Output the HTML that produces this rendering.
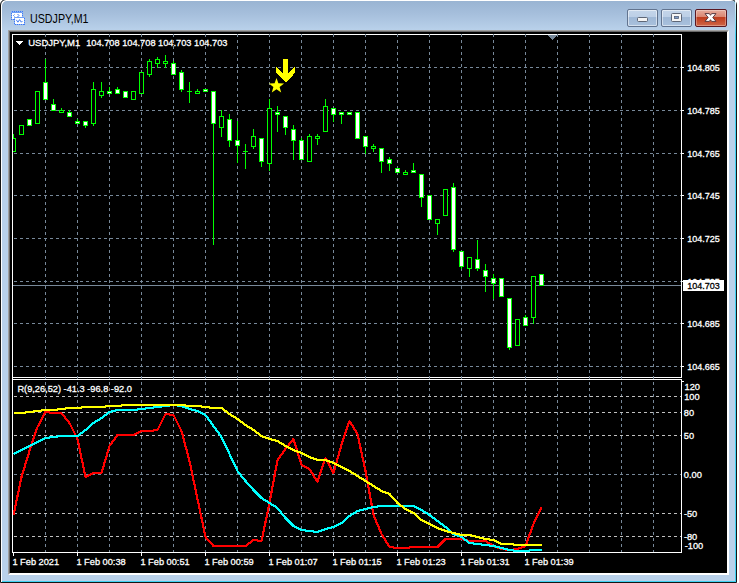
<!DOCTYPE html>
<html><head><meta charset="utf-8"><title>USDJPY,M1</title>
<style>
html,body{margin:0;padding:0;background:#fff;overflow:hidden}
body{width:739px;height:583px;position:relative;font-family:"Liberation Sans",sans-serif}
#win{position:absolute;left:0;top:-1px;width:735px;height:582px;border:1px solid #151515;border-radius:6px 6px 0 0;
 background:linear-gradient(#98b3d2 0px,#a6bfdc 14px,#b9d1ea 30px,#b9d1ea 100%);
 box-shadow:inset 1px 1px 0 #fff, inset -1px -1px 0 #3fd2f2;}
#title{position:absolute;left:30px;top:12px;font-size:12px;line-height:14px;color:#000;white-space:nowrap;transform-origin:0 0;transform:scaleX(0.89)}
#client{position:absolute;left:8px;top:30px;width:721px;height:545px;background:#000;box-sizing:border-box;
 border-top:1px solid #a0a0a0;border-left:1px solid #a0a0a0;border-right:1px solid #fff;border-bottom:1px solid #fff}
#client:before{content:"";position:absolute;left:0;top:0;right:0;bottom:0;border-top:1px solid #696969;border-left:1px solid #696969;border-right:1px solid #fff;border-bottom:1px solid #fff}
svg{position:absolute;left:0;top:0}
.btn{position:absolute;top:9px;width:31px;height:18px;box-sizing:border-box;border:1px solid #62748f;border-radius:2px;
 background:linear-gradient(#c4d5ea 0%,#bccfe6 44%,#9fb8d6 47%,#a9c1dd 100%);box-shadow:inset 0 0 0 1px rgba(255,255,255,.5);}
.btn.close{border-color:#5a1822;background:linear-gradient(#e6ab9c 0%,#d98570 44%,#bf3b1c 47%,#cf6648 100%);box-shadow:inset 0 0 0 1px rgba(255,255,255,.3);}
</style></head>
<body>
<div id="win"></div>
<div style="position:absolute;left:735px;top:1px;width:1px;height:34px;background:linear-gradient(#eaf6fb 0,#c8ecf8 8px,#7fdff6 22px,#3fd2f2 34px)"></div>
<div id="title">USDJPY,M1</div>
<div class="btn" style="left:627px"></div>
<div class="btn" style="left:661px"></div>
<div class="btn close" style="left:695px;width:32px"></div>
<div id="client"></div>
<svg width="739" height="583" viewBox="0 0 739 583" shape-rendering="crispEdges">
<defs><clipPath id="cm"><rect x="13" y="35" width="668" height="342"/></clipPath>
<clipPath id="cs"><rect x="13" y="380" width="668" height="172"/></clipPath></defs>
<!-- title icon -->
<g>
<rect x="11.5" y="11.5" width="11" height="8" fill="#fff" stroke="#8db3f7"/>
<rect x="11.5" y="11.5" width="11" height="8" fill="none" stroke="#3f7bf2" stroke-dasharray="1 1"/>
<rect x="12" y="12" width="10" height="1" fill="#6f9ff5"/>
<path d="M14.5 14.5l-1 1 1 1M17.5 14l1.5 1.5-1.5 1.5" fill="none" stroke="#3f7bf2" shape-rendering="auto"/>
<rect x="14.5" y="17.5" width="10" height="7" fill="#fff" stroke="#8db3f7"/>
<rect x="14.5" y="17.5" width="10" height="7" fill="none" stroke="#3f7bf2" stroke-dasharray="1 1"/>
<rect x="15" y="17" width="9" height="1" fill="#6f9ff5"/>
<path d="M16.3 19.8l1.6 2.4 1.7-2.6 1.7 2.6 1.2-1.2" fill="none" stroke="#3f7bf2" stroke-width="1" shape-rendering="auto"/>
</g>
<!-- caption glyphs -->
<g shape-rendering="auto">
<rect x="637.5" y="17.5" width="10" height="4" rx="1" fill="#f4f4f4" stroke="#5e6676"/>
<rect x="671.5" y="13.5" width="10" height="8" rx="1" fill="#f6f6f6" stroke="#5e6676"/>
<rect x="674.5" y="16.5" width="4" height="2" fill="#7d9cc6" stroke="#55607a" stroke-width="0.8"/>
<path d="M705 13.6H709.4L710.5 15.3L711.6 13.6H716L712.8 17.5L716 21.4H711.6L710.5 19.7L709.4 21.4H705L708.2 17.5Z" fill="#fff" stroke="#5b3a40" stroke-width="1" stroke-linejoin="round"/>
</g>
<g fill="#fff">
<rect x="12" y="34" width="670" height="1"/>
<rect x="12" y="34" width="1" height="519"/>
<rect x="681" y="34" width="1" height="344"/>
<rect x="681" y="379" width="1" height="174"/>
<rect x="682" y="381" width="2" height="1"/>
<rect x="12" y="377" width="670" height="1"/>
<rect x="12" y="379" width="670" height="1"/>
<rect x="12" y="552" width="670" height="1"/>
<rect x="682" y="67" width="2" height="1"/>
<rect x="682" y="110" width="2" height="1"/>
<rect x="682" y="153" width="2" height="1"/>
<rect x="682" y="195" width="2" height="1"/>
<rect x="682" y="238" width="2" height="1"/>
<rect x="682" y="281" width="2" height="1"/>
<rect x="682" y="323" width="2" height="1"/>
<rect x="682" y="366" width="2" height="1"/>
<rect x="13" y="553" width="1" height="3"/>
<rect x="77" y="553" width="1" height="3"/>
<rect x="141" y="553" width="1" height="3"/>
<rect x="205" y="553" width="1" height="3"/>
<rect x="269" y="553" width="1" height="3"/>
<rect x="333" y="553" width="1" height="3"/>
<rect x="397" y="553" width="1" height="3"/>
<rect x="461" y="553" width="1" height="3"/>
<rect x="525" y="553" width="1" height="3"/>
</g>
<path d="M45.5 34V552" stroke="#778899" stroke-dasharray="3 3"/>
<path d="M77.5 34V552" stroke="#778899" stroke-dasharray="3 3"/>
<path d="M109.5 34V552" stroke="#778899" stroke-dasharray="3 3"/>
<path d="M141.5 34V552" stroke="#778899" stroke-dasharray="3 3"/>
<path d="M173.5 34V552" stroke="#778899" stroke-dasharray="3 3"/>
<path d="M205.5 34V552" stroke="#778899" stroke-dasharray="3 3"/>
<path d="M237.5 34V552" stroke="#778899" stroke-dasharray="3 3"/>
<path d="M269.5 34V552" stroke="#778899" stroke-dasharray="3 3"/>
<path d="M301.5 34V552" stroke="#778899" stroke-dasharray="3 3"/>
<path d="M333.5 34V552" stroke="#778899" stroke-dasharray="3 3"/>
<path d="M365.5 34V552" stroke="#778899" stroke-dasharray="3 3"/>
<path d="M397.5 34V552" stroke="#778899" stroke-dasharray="3 3"/>
<path d="M429.5 34V552" stroke="#778899" stroke-dasharray="3 3"/>
<path d="M461.5 34V552" stroke="#778899" stroke-dasharray="3 3"/>
<path d="M493.5 34V552" stroke="#778899" stroke-dasharray="3 3"/>
<path d="M525.5 34V552" stroke="#778899" stroke-dasharray="3 3"/>
<path d="M557.5 34V552" stroke="#778899" stroke-dasharray="3 3"/>
<path d="M589.5 34V552" stroke="#778899" stroke-dasharray="3 3"/>
<path d="M621.5 34V552" stroke="#778899" stroke-dasharray="3 3"/>
<path d="M653.5 34V552" stroke="#778899" stroke-dasharray="3 3"/>
<path d="M14 67.5H681" stroke="#778899" stroke-dasharray="3 3"/>
<path d="M14 110.5H681" stroke="#778899" stroke-dasharray="3 3"/>
<path d="M14 153.5H681" stroke="#778899" stroke-dasharray="3 3"/>
<path d="M14 195.5H681" stroke="#778899" stroke-dasharray="3 3"/>
<path d="M14 238.5H681" stroke="#778899" stroke-dasharray="3 3"/>
<path d="M14 281.5H681" stroke="#778899" stroke-dasharray="3 3"/>
<path d="M14 323.5H681" stroke="#778899" stroke-dasharray="3 3"/>
<path d="M14 366.5H681" stroke="#778899" stroke-dasharray="3 3"/>
<path d="M14 396.5H681" stroke="#c0c0c0" stroke-dasharray="3 3"/>
<path d="M14 412.5H681" stroke="#c0c0c0" stroke-dasharray="3 3"/>
<path d="M14 435.5H681" stroke="#c0c0c0" stroke-dasharray="3 3"/>
<path d="M14 474.5H681" stroke="#778899" stroke-dasharray="3 3"/>
<path d="M14 513.5H681" stroke="#c0c0c0" stroke-dasharray="3 3"/>
<path d="M14 536.5H681" stroke="#c0c0c0" stroke-dasharray="3 3"/>
<path d="M547.3 35H557.3L552.3 40.2Z" fill="#778899"/>
<rect x="13" y="285" width="668" height="1" fill="#778899"/>
<g clip-path="url(#cm)">
<rect x="13" y="134" width="1" height="18" fill="#00ff00"/>
<rect x="11" y="138" width="5" height="14" fill="#00ff00"/>
<rect x="12" y="139" width="3" height="12" fill="#000"/>
<rect x="19" y="125" width="5" height="10" fill="#00ff00"/>
<rect x="20" y="126" width="3" height="8" fill="#000"/>
<rect x="27" y="119" width="5" height="7" fill="#00ff00"/>
<rect x="28" y="120" width="3" height="5" fill="#fff"/>
<rect x="35" y="91" width="5" height="33" fill="#00ff00"/>
<rect x="36" y="92" width="3" height="31" fill="#000"/>
<rect x="45" y="59" width="1" height="41" fill="#00ff00"/>
<rect x="43" y="82" width="5" height="18" fill="#00ff00"/>
<rect x="44" y="83" width="3" height="16" fill="#fff"/>
<rect x="53" y="99" width="1" height="12" fill="#00ff00"/>
<rect x="51" y="104" width="5" height="7" fill="#00ff00"/>
<rect x="52" y="105" width="3" height="5" fill="#fff"/>
<rect x="61" y="108" width="1" height="5" fill="#00ff00"/>
<rect x="59" y="110" width="5" height="3" fill="#00ff00"/>
<rect x="60" y="111" width="3" height="1" fill="#000"/>
<rect x="69" y="110" width="1" height="7" fill="#00ff00"/>
<rect x="67" y="112" width="5" height="5" fill="#00ff00"/>
<rect x="68" y="113" width="3" height="3" fill="#fff"/>
<rect x="77" y="119" width="1" height="5" fill="#00ff00"/>
<rect x="75" y="121" width="5" height="3" fill="#00ff00"/>
<rect x="76" y="122" width="3" height="1" fill="#fff"/>
<rect x="85" y="121" width="1" height="7" fill="#00ff00"/>
<rect x="83" y="121" width="5" height="5" fill="#00ff00"/>
<rect x="84" y="122" width="3" height="3" fill="#fff"/>
<rect x="93" y="82" width="1" height="44" fill="#00ff00"/>
<rect x="91" y="89" width="5" height="35" fill="#00ff00"/>
<rect x="92" y="90" width="3" height="33" fill="#000"/>
<rect x="101" y="82" width="1" height="16" fill="#00ff00"/>
<rect x="99" y="91" width="5" height="5" fill="#00ff00"/>
<rect x="100" y="92" width="3" height="3" fill="#000"/>
<rect x="109" y="87" width="1" height="7" fill="#00ff00"/>
<rect x="107" y="91" width="5" height="3" fill="#00ff00"/>
<rect x="108" y="92" width="3" height="1" fill="#fff"/>
<rect x="117" y="87" width="1" height="7" fill="#00ff00"/>
<rect x="115" y="89" width="5" height="5" fill="#00ff00"/>
<rect x="116" y="90" width="3" height="3" fill="#fff"/>
<rect x="123" y="91" width="5" height="7" fill="#00ff00"/>
<rect x="124" y="92" width="3" height="5" fill="#fff"/>
<rect x="131" y="91" width="5" height="9" fill="#00ff00"/>
<rect x="132" y="92" width="3" height="7" fill="#000"/>
<rect x="139" y="72" width="5" height="22" fill="#00ff00"/>
<rect x="140" y="73" width="3" height="20" fill="#000"/>
<rect x="149" y="59" width="1" height="18" fill="#00ff00"/>
<rect x="147" y="61" width="5" height="14" fill="#00ff00"/>
<rect x="148" y="62" width="3" height="12" fill="#000"/>
<rect x="157" y="57" width="1" height="11" fill="#00ff00"/>
<rect x="155" y="59" width="5" height="5" fill="#00ff00"/>
<rect x="156" y="60" width="3" height="3" fill="#000"/>
<rect x="165" y="55" width="1" height="13" fill="#00ff00"/>
<rect x="163" y="61" width="5" height="3" fill="#00ff00"/>
<rect x="164" y="62" width="3" height="1" fill="#000"/>
<rect x="173" y="61" width="1" height="14" fill="#00ff00"/>
<rect x="171" y="63" width="5" height="12" fill="#00ff00"/>
<rect x="172" y="64" width="3" height="10" fill="#fff"/>
<rect x="181" y="70" width="1" height="22" fill="#00ff00"/>
<rect x="179" y="72" width="5" height="18" fill="#00ff00"/>
<rect x="180" y="73" width="3" height="16" fill="#fff"/>
<rect x="189" y="82" width="1" height="21" fill="#00ff00"/>
<rect x="187" y="91" width="5" height="1" fill="#00ff00"/>
<rect x="197" y="89" width="1" height="5" fill="#00ff00"/>
<rect x="195" y="91" width="5" height="3" fill="#00ff00"/>
<rect x="196" y="92" width="3" height="1" fill="#000"/>
<rect x="203" y="89" width="5" height="3" fill="#00ff00"/>
<rect x="204" y="90" width="3" height="1" fill="#fff"/>
<rect x="213" y="91" width="1" height="154" fill="#00ff00"/>
<rect x="211" y="91" width="5" height="33" fill="#00ff00"/>
<rect x="212" y="92" width="3" height="31" fill="#fff"/>
<rect x="221" y="110" width="1" height="27" fill="#00ff00"/>
<rect x="219" y="116" width="5" height="12" fill="#00ff00"/>
<rect x="220" y="117" width="3" height="10" fill="#000"/>
<rect x="229" y="114" width="1" height="33" fill="#00ff00"/>
<rect x="227" y="119" width="5" height="22" fill="#00ff00"/>
<rect x="228" y="120" width="3" height="20" fill="#fff"/>
<rect x="237" y="121" width="1" height="42" fill="#00ff00"/>
<rect x="235" y="140" width="5" height="6" fill="#00ff00"/>
<rect x="236" y="141" width="3" height="4" fill="#fff"/>
<rect x="245" y="144" width="1" height="25" fill="#00ff00"/>
<rect x="243" y="151" width="5" height="1" fill="#00ff00"/>
<rect x="253" y="129" width="1" height="20" fill="#00ff00"/>
<rect x="251" y="136" width="5" height="11" fill="#00ff00"/>
<rect x="252" y="137" width="3" height="9" fill="#000"/>
<rect x="261" y="138" width="1" height="29" fill="#00ff00"/>
<rect x="259" y="138" width="5" height="24" fill="#00ff00"/>
<rect x="260" y="139" width="3" height="22" fill="#fff"/>
<rect x="269" y="99" width="1" height="72" fill="#00ff00"/>
<rect x="267" y="108" width="5" height="56" fill="#00ff00"/>
<rect x="268" y="109" width="3" height="54" fill="#000"/>
<rect x="277" y="106" width="1" height="26" fill="#00ff00"/>
<rect x="275" y="112" width="5" height="3" fill="#00ff00"/>
<rect x="276" y="113" width="3" height="1" fill="#fff"/>
<rect x="285" y="116" width="1" height="19" fill="#00ff00"/>
<rect x="283" y="116" width="5" height="12" fill="#00ff00"/>
<rect x="284" y="117" width="3" height="10" fill="#fff"/>
<rect x="293" y="125" width="1" height="35" fill="#00ff00"/>
<rect x="291" y="129" width="5" height="12" fill="#00ff00"/>
<rect x="292" y="130" width="3" height="10" fill="#fff"/>
<rect x="301" y="138" width="1" height="22" fill="#00ff00"/>
<rect x="299" y="140" width="5" height="20" fill="#00ff00"/>
<rect x="300" y="141" width="3" height="18" fill="#fff"/>
<rect x="309" y="134" width="1" height="28" fill="#00ff00"/>
<rect x="307" y="136" width="5" height="26" fill="#00ff00"/>
<rect x="308" y="137" width="3" height="24" fill="#000"/>
<rect x="317" y="134" width="1" height="11" fill="#00ff00"/>
<rect x="315" y="136" width="5" height="3" fill="#00ff00"/>
<rect x="316" y="137" width="3" height="1" fill="#000"/>
<rect x="325" y="99" width="1" height="33" fill="#00ff00"/>
<rect x="323" y="106" width="5" height="26" fill="#00ff00"/>
<rect x="324" y="107" width="3" height="24" fill="#000"/>
<rect x="333" y="108" width="1" height="14" fill="#00ff00"/>
<rect x="331" y="108" width="5" height="7" fill="#00ff00"/>
<rect x="332" y="109" width="3" height="5" fill="#fff"/>
<rect x="341" y="112" width="1" height="12" fill="#00ff00"/>
<rect x="339" y="112" width="5" height="3" fill="#00ff00"/>
<rect x="340" y="113" width="3" height="1" fill="#fff"/>
<rect x="347" y="112" width="5" height="3" fill="#00ff00"/>
<rect x="348" y="113" width="3" height="1" fill="#fff"/>
<rect x="355" y="112" width="5" height="27" fill="#00ff00"/>
<rect x="356" y="113" width="3" height="25" fill="#fff"/>
<rect x="365" y="136" width="1" height="18" fill="#00ff00"/>
<rect x="363" y="136" width="5" height="11" fill="#00ff00"/>
<rect x="364" y="137" width="3" height="9" fill="#fff"/>
<rect x="373" y="144" width="1" height="8" fill="#00ff00"/>
<rect x="371" y="146" width="5" height="3" fill="#00ff00"/>
<rect x="372" y="147" width="3" height="1" fill="#000"/>
<rect x="381" y="148" width="1" height="25" fill="#00ff00"/>
<rect x="379" y="148" width="5" height="14" fill="#00ff00"/>
<rect x="380" y="149" width="3" height="12" fill="#fff"/>
<rect x="389" y="157" width="1" height="14" fill="#00ff00"/>
<rect x="387" y="159" width="5" height="5" fill="#00ff00"/>
<rect x="388" y="160" width="3" height="3" fill="#fff"/>
<rect x="395" y="168" width="5" height="5" fill="#00ff00"/>
<rect x="396" y="169" width="3" height="3" fill="#fff"/>
<rect x="405" y="170" width="1" height="5" fill="#00ff00"/>
<rect x="403" y="172" width="5" height="3" fill="#00ff00"/>
<rect x="404" y="173" width="3" height="1" fill="#000"/>
<rect x="413" y="163" width="1" height="10" fill="#00ff00"/>
<rect x="411" y="170" width="5" height="3" fill="#00ff00"/>
<rect x="412" y="171" width="3" height="1" fill="#fff"/>
<rect x="421" y="174" width="1" height="33" fill="#00ff00"/>
<rect x="419" y="174" width="5" height="24" fill="#00ff00"/>
<rect x="420" y="175" width="3" height="22" fill="#fff"/>
<rect x="427" y="195" width="5" height="25" fill="#00ff00"/>
<rect x="428" y="196" width="3" height="23" fill="#fff"/>
<rect x="437" y="219" width="1" height="16" fill="#00ff00"/>
<rect x="435" y="219" width="5" height="5" fill="#00ff00"/>
<rect x="436" y="220" width="3" height="3" fill="#000"/>
<rect x="443" y="189" width="5" height="27" fill="#00ff00"/>
<rect x="444" y="190" width="3" height="25" fill="#000"/>
<rect x="453" y="183" width="1" height="69" fill="#00ff00"/>
<rect x="451" y="187" width="5" height="63" fill="#00ff00"/>
<rect x="452" y="188" width="3" height="61" fill="#fff"/>
<rect x="461" y="251" width="1" height="18" fill="#00ff00"/>
<rect x="459" y="251" width="5" height="16" fill="#00ff00"/>
<rect x="460" y="252" width="3" height="14" fill="#fff"/>
<rect x="469" y="257" width="1" height="20" fill="#00ff00"/>
<rect x="467" y="257" width="5" height="12" fill="#00ff00"/>
<rect x="468" y="258" width="3" height="10" fill="#000"/>
<rect x="477" y="240" width="1" height="31" fill="#00ff00"/>
<rect x="475" y="259" width="5" height="10" fill="#00ff00"/>
<rect x="476" y="260" width="3" height="8" fill="#fff"/>
<rect x="485" y="264" width="1" height="28" fill="#00ff00"/>
<rect x="483" y="270" width="5" height="7" fill="#00ff00"/>
<rect x="484" y="271" width="3" height="5" fill="#fff"/>
<rect x="493" y="274" width="1" height="25" fill="#00ff00"/>
<rect x="491" y="278" width="5" height="6" fill="#00ff00"/>
<rect x="492" y="279" width="3" height="4" fill="#fff"/>
<rect x="499" y="278" width="5" height="19" fill="#00ff00"/>
<rect x="500" y="279" width="3" height="17" fill="#fff"/>
<rect x="509" y="298" width="1" height="52" fill="#00ff00"/>
<rect x="507" y="298" width="5" height="50" fill="#00ff00"/>
<rect x="508" y="299" width="3" height="48" fill="#fff"/>
<rect x="515" y="319" width="5" height="27" fill="#00ff00"/>
<rect x="516" y="320" width="3" height="25" fill="#000"/>
<rect x="525" y="315" width="1" height="11" fill="#00ff00"/>
<rect x="523" y="317" width="5" height="9" fill="#00ff00"/>
<rect x="524" y="318" width="3" height="7" fill="#fff"/>
<rect x="533" y="276" width="1" height="48" fill="#00ff00"/>
<rect x="531" y="276" width="5" height="42" fill="#00ff00"/>
<rect x="532" y="277" width="3" height="40" fill="#000"/>
<rect x="539" y="274" width="5" height="12" fill="#00ff00"/>
<rect x="540" y="275" width="3" height="10" fill="#fff"/>
</g>
<path d="M282.7 59H288.3V72.8L295.3 66V72.7L285.6 82.5L276 72.7V66L282.7 72.8Z" fill="#ffff00"/>
<polygon points="276.5,77.9 278.4,83.2 284.1,83.4 279.6,86.9 281.2,92.4 276.5,89.2 271.8,92.4 273.4,86.9 268.9,83.4 274.6,83.2" fill="#ffff00" shape-rendering="geometricPrecision"/>
<g clip-path="url(#cs)">
<polyline points="13.5,515 21.5,477 29.5,451 37.5,427 45.5,412 53.5,413 61.5,413 69.5,423 77.5,439 85.5,477 93.5,473 101.5,473 109.5,446 117.5,435 125.5,435 133.5,435 141.5,431 149.5,431 157.5,430 165.5,414 173.5,415 181.5,431 189.5,461 197.5,499 205.5,537 213.5,546 221.5,546 229.5,546 237.5,546 245.5,546 253.5,540 261.5,541 269.5,503 277.5,460 285.5,449 293.5,439 301.5,465 309.5,469 317.5,482 325.5,458 333.5,473 341.5,445 349.5,421 357.5,434 365.5,471 373.5,515 381.5,534 389.5,547 397.5,548 405.5,548 413.5,547 421.5,547 429.5,547 437.5,547 445.5,539 453.5,539 461.5,539 469.5,541 477.5,541 485.5,541 493.5,546 501.5,549 509.5,550 517.5,549 525.5,546 533.5,524 541.5,507" fill="none" stroke="#ff0000" stroke-width="2.2" stroke-linejoin="round"/>
<polyline points="13.5,454 21.5,450 29.5,446 37.5,442 45.5,438 53.5,437 61.5,436 69.5,436 77.5,436 85.5,430 93.5,423 101.5,418 109.5,412 117.5,410 125.5,410 133.5,410 141.5,409 149.5,408 157.5,407 165.5,406 173.5,405 181.5,406 189.5,409 197.5,411 205.5,415 213.5,426 221.5,437 229.5,454 237.5,471 245.5,481 253.5,490 261.5,498 269.5,503 277.5,508 285.5,518 293.5,526 301.5,530 309.5,531 317.5,532 325.5,529 333.5,527 341.5,523 349.5,516 357.5,511 365.5,509 373.5,507 381.5,506 389.5,506 397.5,506 405.5,506 413.5,506 421.5,510 429.5,515 437.5,521 445.5,527 453.5,534 461.5,537 469.5,543 477.5,544 485.5,545 493.5,546 501.5,548 509.5,550 517.5,551 525.5,551 533.5,550 541.5,550" fill="none" stroke="#00ffff" stroke-width="2.2" stroke-linejoin="round"/>
<polyline points="13.5,413 21.5,413 29.5,412 37.5,411 45.5,410 53.5,410 61.5,409 69.5,408 77.5,408 85.5,407 93.5,407 101.5,407 109.5,406 117.5,406 125.5,405 133.5,405 141.5,405 149.5,405 157.5,405 165.5,405 173.5,405 181.5,405 189.5,406 197.5,406 205.5,407 213.5,408 221.5,408 229.5,414 237.5,419 245.5,425 253.5,430 261.5,436 269.5,439 277.5,441 285.5,446 293.5,450 301.5,453 309.5,457 317.5,460 325.5,460 333.5,463 341.5,467 349.5,471 357.5,476 365.5,481 373.5,486 381.5,491 389.5,494 397.5,503 405.5,509 413.5,513 421.5,520 429.5,524 437.5,528 445.5,531 453.5,533 461.5,535 469.5,535 477.5,537 485.5,539 493.5,540 501.5,544 509.5,544 517.5,545 525.5,545 533.5,545 541.5,545" fill="none" stroke="#ffff00" stroke-width="2.2" stroke-linejoin="round"/>
</g>
<g font-family="'Liberation Sans', sans-serif" font-size="9.5px" shape-rendering="auto">
<text transform="translate(687.3,70.6) scale(0.95,1)" fill="#fff" stroke="#fff" stroke-width="0.3" >104.805</text>
<text transform="translate(687.3,113.6) scale(0.95,1)" fill="#fff" stroke="#fff" stroke-width="0.3" >104.785</text>
<text transform="translate(687.3,156.6) scale(0.95,1)" fill="#fff" stroke="#fff" stroke-width="0.3" >104.765</text>
<text transform="translate(687.3,198.6) scale(0.95,1)" fill="#fff" stroke="#fff" stroke-width="0.3" >104.745</text>
<text transform="translate(687.3,241.6) scale(0.95,1)" fill="#fff" stroke="#fff" stroke-width="0.3" >104.725</text>
<text transform="translate(687.3,284.6) scale(0.95,1)" fill="#fff" stroke="#fff" stroke-width="0.3" >104.705</text>
<text transform="translate(687.3,326.6) scale(0.95,1)" fill="#fff" stroke="#fff" stroke-width="0.3" >104.685</text>
<text transform="translate(687.3,369.6) scale(0.95,1)" fill="#fff" stroke="#fff" stroke-width="0.3" >104.665</text>
<rect x="683" y="280" width="41" height="11" fill="#fff"/>
<text transform="translate(687.3,288.7) scale(0.95,1)" fill="#000" stroke="#000" stroke-width="0.3" >104.703</text>
<text transform="translate(684.6,389.7) scale(0.974,1)" fill="#fff" stroke="#fff" stroke-width="0.3" >120</text>
<text transform="translate(684.2,399.7) scale(0.974,1)" fill="#fff" stroke="#fff" stroke-width="0.3" >100</text>
<text transform="translate(683.8,415.7) scale(0.974,1)" fill="#fff" stroke="#fff" stroke-width="0.3" >80</text>
<text transform="translate(683.8,438.7) scale(0.974,1)" fill="#fff" stroke="#fff" stroke-width="0.3" >50</text>
<text transform="translate(683.8,477.7) scale(0.974,1)" fill="#fff" stroke="#fff" stroke-width="0.3" >0.00</text>
<text transform="translate(683.9,516.7) scale(0.974,1)" fill="#fff" stroke="#fff" stroke-width="0.3" >-50</text>
<text transform="translate(683.9,539.7) scale(0.974,1)" fill="#fff" stroke="#fff" stroke-width="0.3" >-80</text>
<text transform="translate(684.7,548.8) scale(0.974,1)" fill="#fff" stroke="#fff" stroke-width="0.3" >-100</text>
<text transform="translate(12.4,565) scale(0.974,1)" fill="#fff" stroke="#fff" stroke-width="0.3" >1 Feb 2021</text>
<text transform="translate(76.4,565) scale(0.974,1)" fill="#fff" stroke="#fff" stroke-width="0.3" >1 Feb 00:38</text>
<text transform="translate(140.4,565) scale(0.974,1)" fill="#fff" stroke="#fff" stroke-width="0.3" >1 Feb 00:51</text>
<text transform="translate(204.4,565) scale(0.974,1)" fill="#fff" stroke="#fff" stroke-width="0.3" >1 Feb 00:59</text>
<text transform="translate(268.4,565) scale(0.974,1)" fill="#fff" stroke="#fff" stroke-width="0.3" >1 Feb 01:07</text>
<text transform="translate(332.4,565) scale(0.974,1)" fill="#fff" stroke="#fff" stroke-width="0.3" >1 Feb 01:15</text>
<text transform="translate(396.4,565) scale(0.974,1)" fill="#fff" stroke="#fff" stroke-width="0.3" >1 Feb 01:23</text>
<text transform="translate(460.4,565) scale(0.974,1)" fill="#fff" stroke="#fff" stroke-width="0.3" >1 Feb 01:31</text>
<text transform="translate(524.4,565) scale(0.974,1)" fill="#fff" stroke="#fff" stroke-width="0.3" >1 Feb 01:39</text>
<text transform="translate(28.2,46) scale(1.0,1)" fill="#fff" stroke="#fff" stroke-width="0.3" >USDJPY,M1</text>
<text transform="translate(86.2,46) scale(0.974,1)" fill="#fff" stroke="#fff" stroke-width="0.3" >104.708 104.708 104.703 104.703</text>
<text transform="translate(17.4,391.5) scale(0.974,1)" fill="#fff" stroke="#fff" stroke-width="0.3" >R(9,26,52) -41.3 -96.8 -92.0</text>
</g>
<path d="M16 41H23L19.5 45Z" fill="#fff"/>
</svg>
</body></html>
